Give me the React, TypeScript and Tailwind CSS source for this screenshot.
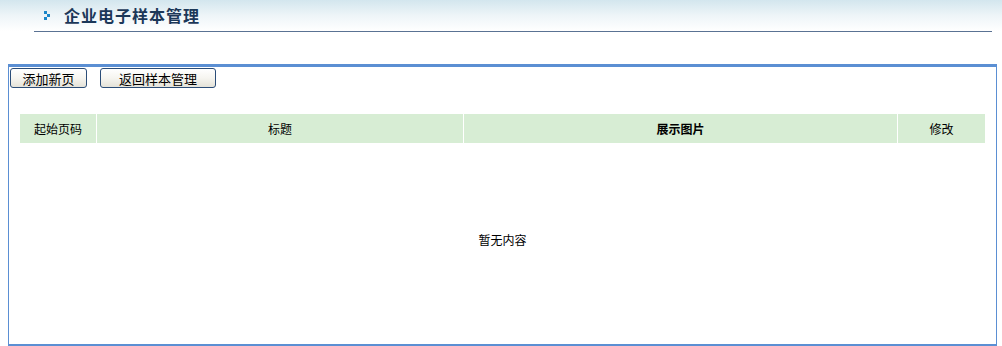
import React from "react";

const cols = [
  { label: "起始页码", w: "w-[76px]", bold: false },
  { label: "标题", w: "w-[366px]", bold: false },
  { label: "展示图片", w: "w-[433px]", bold: true },
  { label: "修改", w: "w-[87px]", bold: false },
];

function Bullet() {
  return (
    <svg width="6" height="9" viewBox="0 0 6 9" className="block">
      <rect x="0" y="0" width="3" height="3" fill="#1b86c8" />
      <rect x="3" y="3" width="3" height="3" fill="#1b86c8" />
      <rect x="0" y="6" width="3" height="3" fill="#1b86c8" />
    </svg>
  );
}

function Btn({ children, w }: { children: React.ReactNode; w: string }) {
  return (
    <button
      className={`${w} h-[20px] border border-[#2b4d78] rounded-[3px] bg-gradient-to-b from-white via-[#f6f5f0] to-[#e4e2d8] text-[13px] leading-none text-black flex items-center justify-center`}
    >
      {children}
    </button>
  );
}

export default function App() {
  return (
    <div className="w-[1002px] h-[346px] bg-white font-['Noto_Sans_CJK_SC',sans-serif] text-black overflow-hidden">
      {/* header */}
      <div className="h-[31px] bg-gradient-to-b from-[#d3e6ee] via-[#eef5f8] to-white">
        <div className="flex items-center h-[31px] pl-[44px] gap-[14px] pb-[1px]">
          <Bullet />
          <h1 className="text-[16px] font-bold tracking-[1px] text-[#1c3859] leading-none">
            企业电子样本管理
          </h1>
        </div>
      </div>
      <div className="ml-[34px] w-[958px] h-px bg-[#5a7293]" />

      {/* panel */}
      <div className="mt-[32px] ml-[8px] w-[989px] h-[282px] border-[#5b8fd3] border-t-[3px] border-b-2 border-l border-r flex flex-col">
        <div className="flex gap-[13px] ml-px mt-px">
          <Btn w="w-[77px]">添加新页</Btn>
          <Btn w="w-[116px]">返回样本管理</Btn>
        </div>

        <div className="ml-[11px] mt-[26px] w-[965px]">
          <div className="flex gap-px bg-white h-[29px]">
            {cols.map((c) => (
              <div
                key={c.label}
                className={`${c.w} bg-[#d7edd4] flex items-center justify-center text-[12px] ${c.bold ? "font-bold" : ""}`}
              >
                {c.label}
              </div>
            ))}
          </div>
          <div className="h-[194px] flex items-center justify-center text-[12px]">
            暂无内容
          </div>
        </div>
      </div>
    </div>
  );
}
